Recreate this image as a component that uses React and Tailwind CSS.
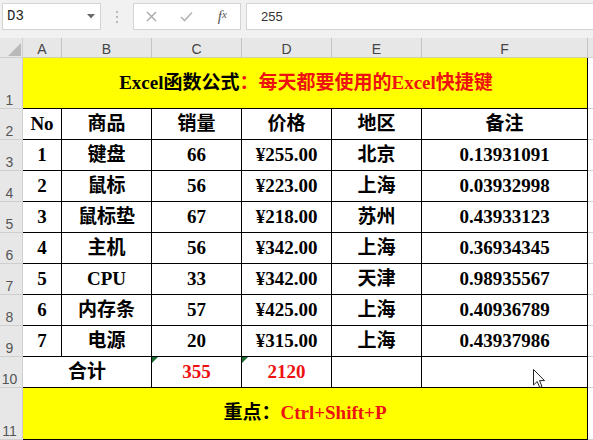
import React from 'react';

const COLS = ['A', 'B', 'C', 'D', 'E', 'F'];

const HEAD = ['No', '商品', '销量', '价格', '地区', '备注'];

const ROWS = [
  ['1', '键盘', '66', '¥255.00', '北京', '0.13931091'],
  ['2', '鼠标', '56', '¥223.00', '上海', '0.03932998'],
  ['3', '鼠标垫', '67', '¥218.00', '苏州', '0.43933123'],
  ['4', '主机', '56', '¥342.00', '上海', '0.36934345'],
  ['5', 'CPU', '33', '¥342.00', '天津', '0.98935567'],
  ['6', '内存条', '57', '¥425.00', '上海', '0.40936789'],
  ['7', '电源', '20', '¥315.00', '上海', '0.43937986'],
];

const cellFont = "font-['Liberation_Serif','Noto_Sans_CJK_SC',serif]";

function RowHead({ n }) {
  return (
    <div className="bg-[#e7e7e7] border-r border-b border-[#cfcfcf] flex items-end justify-center pr-[3px] pb-[1px] text-[14px] leading-[14px] text-[#555] font-['Liberation_Sans',sans-serif]">
      {n}
    </div>
  );
}

function Cell({ children, red = false, className = '' }) {
  return (
    <div className={`border-r border-b border-black flex items-center justify-center text-[19px] font-bold ${red ? 'text-[#ee1111]' : 'text-black'} ${cellFont} ${className}`}>
      {children}
    </div>
  );
}

function Grid() {
  return <div className="border-b border-dashed border-[#d0d0d0]" />;
}

function GreenFlag() {
  return <span className="absolute left-0 top-0 w-0 h-0 border-t-[6px] border-t-[#1d6b2f] border-r-[6px] border-r-transparent" />;
}

function FormulaBar() {
  return (
    <div className="h-[38px] bg-[#f1f1f1] flex items-start pt-[3px] pl-[2px]">
      <div className="w-[99px] h-[27px] bg-white border border-[#d4d4d4] flex items-center justify-between pl-[4px] pr-[5px]">
        <span className="font-['Liberation_Mono',monospace] text-[14px] text-[#222]">D3</span>
        <svg width="8" height="5" viewBox="0 0 8 5">
          <polygon points="0,0 8,0 4,4.5" fill="#6b6b6b" />
        </svg>
      </div>
      <div className="w-[32px] h-[27px] flex flex-col items-center justify-center gap-[3px]">
        <span className="w-[2px] h-[2px] bg-[#b8b8b8]" />
        <span className="w-[2px] h-[2px] bg-[#b8b8b8]" />
        <span className="w-[2px] h-[2px] bg-[#b8b8b8]" />
      </div>
      <div className="w-[108px] h-[27px] bg-white border border-[#d4d4d4] flex items-center">
        <span className="w-[36px] flex justify-center">
          <svg width="11" height="11" viewBox="0 0 11 11">
            <path d="M1 1L10 10M10 1L1 10" stroke="#a8a8a8" strokeWidth="1.4" />
          </svg>
        </span>
        <span className="w-[36px] flex justify-center">
          <svg width="13" height="11" viewBox="0 0 13 11">
            <path d="M1 6L4.5 9.5L12 1.5" stroke="#b4b4b4" strokeWidth="1.6" fill="none" />
          </svg>
        </span>
        <span className="w-[36px] flex justify-center font-['Liberation_Serif',serif] italic text-[15px] text-[#555] leading-none">
          f<span className="text-[11px]">x</span>
        </span>
      </div>
      <div className="ml-[5px] flex-1 h-[27px] bg-white border border-r-0 border-[#d4d4d4] flex items-center pl-[14px] font-['Liberation_Sans',sans-serif] text-[13px] text-[#333]">
        255
      </div>
    </div>
  );
}

export default function App() {
  return (
    <div className="relative w-[593px] h-[440px] overflow-hidden bg-white">
      <FormulaBar />
      <div className="grid grid-cols-[23px_39px_90px_90px_90px_90px_166px_5px] grid-rows-[20px_51px_repeat(9,31px)_52px]">
        {/* column headers */}
        <div className="bg-[#e7e7e7] border-r border-b border-[#cfcfcf] flex items-end justify-end pr-[1px] pb-[1px]">
          <svg width="13" height="13" viewBox="0 0 13 13">
            <polygon points="13,0 13,13 0,13" fill="#b9b9b9" />
          </svg>
        </div>
        {COLS.map((c) => (
          <div key={c} className="bg-[#e7e7e7] border-r border-b border-r-[#c4c4c4] border-b-[#d2d2a8] flex items-end justify-center pb-[1px] text-[14px] leading-[14px] text-[#444] font-['Liberation_Sans',sans-serif]">
            {c}
          </div>
        ))}
        <div className="bg-[#e7e7e7] border-b border-[#cfcfcf]" />

        {/* row 1 */}
        <RowHead n="1" />
        <Cell className="col-span-6 bg-[#ffff00] pl-[2px]">
          Excel函数公式<span className="text-[#ee1111]">：每天都要使用的Excel快捷键</span>
        </Cell>
        <Grid />

        {/* row 2 */}
        <RowHead n="2" />
        {HEAD.map((h) => (
          <Cell key={h}>{h}</Cell>
        ))}
        <Grid />

        {ROWS.map((r, i) => (
          <React.Fragment key={i}>
            <RowHead n={String(i + 3)} />
            {r.map((v, j) => (
              <Cell key={j}>{v}</Cell>
            ))}
            <Grid />
          </React.Fragment>
        ))}

        {/* row 10 */}
        <RowHead n="10" />
        <Cell className="col-span-2">合计</Cell>
        <Cell red className="relative">
          <GreenFlag />
          355
        </Cell>
        <Cell red className="relative">
          <GreenFlag />
          2120
        </Cell>
        <Cell />
        <Cell />
        <Grid />

        {/* row 11 */}
        <RowHead n="11" />
        <Cell className="col-span-6 bg-[#ffff00]">
          重点：<span className="text-[#ee1111]">Ctrl+Shift+P</span>
        </Cell>
        <Grid />
      </div>

      {/* mouse pointer */}
      <svg className="absolute left-[533px] top-[369px]" width="13" height="20" viewBox="0 0 13 20">
        <path d="M0.5 0.5L0.5 16L4.2 12.5L6.8 18.5L9 17.5L6.5 11.6L11.5 11.6Z" fill="white" stroke="#222" strokeWidth="1" strokeLinejoin="round" />
      </svg>
    </div>
  );
}
